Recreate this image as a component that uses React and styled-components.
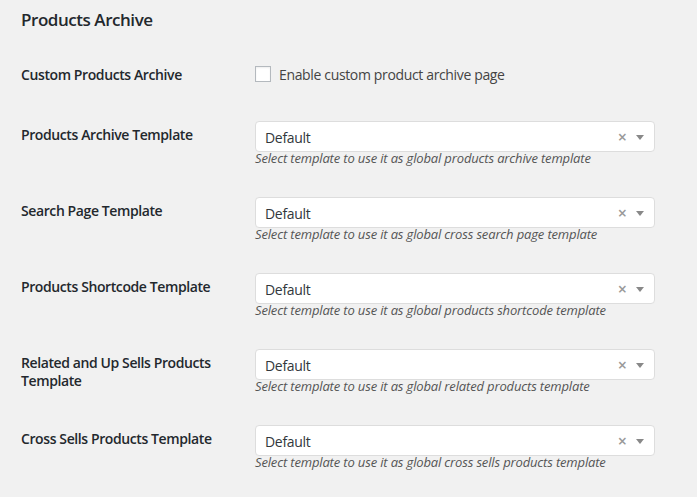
import React from "react";
import styled, { createGlobalStyle } from "styled-components";

const Global = createGlobalStyle`
  html, body { margin: 0; padding: 0; background: #f1f1f1; }
  body { font-family: "Open Sans", "Noto Sans", sans-serif; color: #444; font-size: 14px; }
`;

const Page = styled.div`
  padding: 0 21px;
  width: 697px;
  box-sizing: border-box;
`;

const Title = styled.h2`
  margin: 8px 0 14px;
  font-size: 17px;
  line-height: 24px;
  font-weight: 600;
  color: #23282d;
  letter-spacing: -0.45px;
`;

const Row = styled.div`
  display: grid;
  grid-template-columns: 234px 400px;
  height: ${(p) => p.$h}px;
`;

const Label = styled.div`
  padding-top: 20px;
  font-size: 14px;
  line-height: 18px;
  font-weight: 600;
  color: #23282d;
  padding-right: 20px;
  letter-spacing: -0.4px;
`;

const Field = styled.div`
  padding-top: 15px;
  display: flex;
  flex-direction: column;
`;

const CheckLine = styled.label`
  display: flex;
  align-items: center;
  height: 26px;
  gap: 8px;
  font-size: 14px;
  color: #444;
  letter-spacing: -0.35px;
`;

const Box = styled.span`
  width: 16px;
  height: 16px;
  box-sizing: border-box;
  border: 1px solid #b4b9be;
  background: #fff;
  box-shadow: inset 0 1px 2px rgba(0,0,0,0.07);
`;

const Select = styled.div`
  height: 31px;
  box-sizing: border-box;
  border: 1px solid #ddd;
  border-radius: 4px;
  background: #fff;
  display: flex;
  align-items: center;
  padding: 1px 10px 0 9px;
`;

const Value = styled.span`
  flex: 1;
  font-size: 14px;
  color: #32373c;
  letter-spacing: -0.3px;
`;

const Clear = styled.span`
  font-size: 16px;
  font-weight: 600;
  color: #999;
  margin-right: 9px;
  line-height: 1;
`;

const Arrow = styled.span`
  width: 0;
  height: 0;
  border-style: solid;
  border-width: 5px 4px 0 4px;
  border-color: #888 transparent transparent transparent;
`;

const Desc = styled.p`
  margin: -3px 0 0;
  font-size: 13px;
  line-height: 18px;
  font-style: italic;
  color: #555;
  letter-spacing: -0.15px;
`;

const rows = [
  ["Products Archive Template", "Select template to use it as global products archive template"],
  ["Search Page Template", "Select template to use it as global cross search page template"],
  ["Products Shortcode Template", "Select template to use it as global products shortcode template"],
  ["Related and Up Sells Products Template", "Select template to use it as global related products template"],
  ["Cross Sells Products Template", "Select template to use it as global cross sells products template"],
];

export default function App() {
  return (
    <Page>
      <Global />
      <Title>Products Archive</Title>
      <Row $h={60}>
        <Label>Custom Products Archive</Label>
        <Field>
          <CheckLine>
            <Box />
            Enable custom product archive page
          </CheckLine>
        </Field>
      </Row>
      {rows.map(([label, desc]) => (
        <Row key={label} $h={76}>
          <Label>{label}</Label>
          <Field>
            <Select>
              <Value>Default</Value>
              <Clear>×</Clear>
              <Arrow />
            </Select>
            <Desc>{desc}</Desc>
          </Field>
        </Row>
      ))}
    </Page>
  );
}
